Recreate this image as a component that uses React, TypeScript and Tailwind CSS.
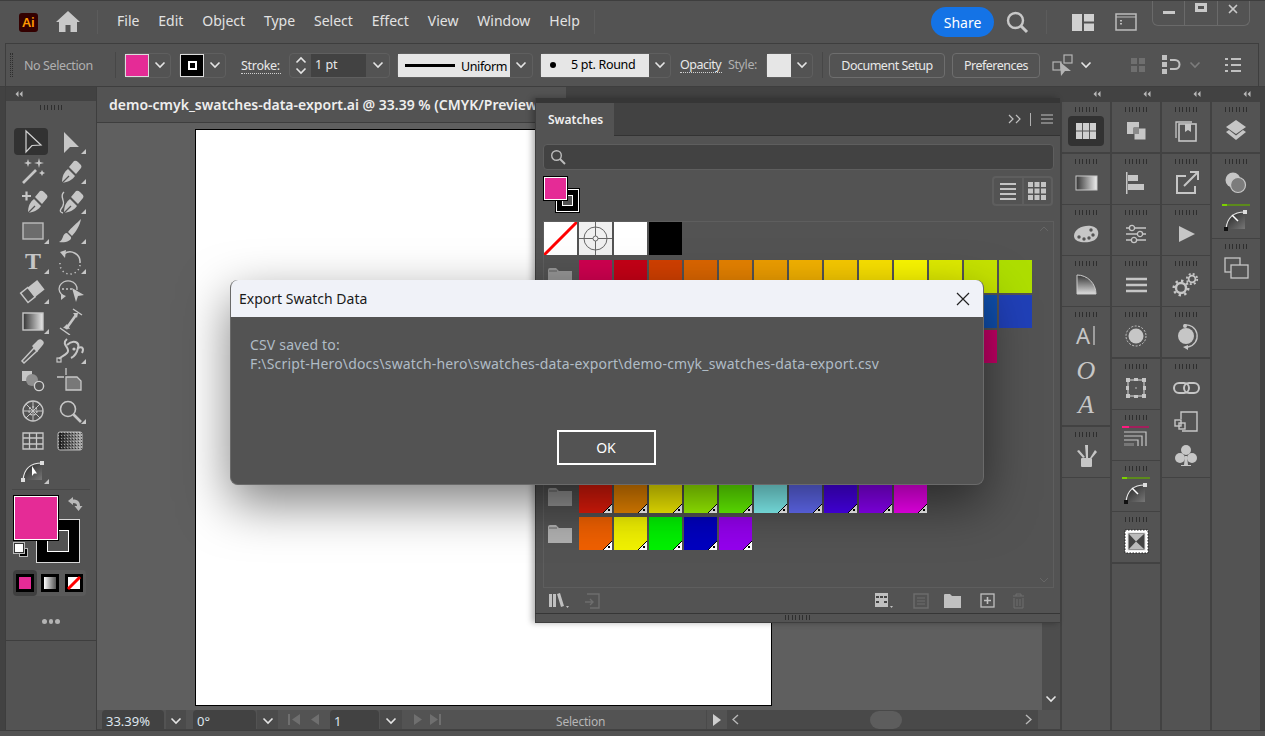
import { X } from 'lucide-react';

const PANEL_TOOLS = ['select', 'direct', 'wand', 'pen', 'anchor', 'curvature', 'rect', 'brush', 'type', 'rotate', 'eraser', 'puppet', 'gradient', 'width', 'dropper', 'warp', 'shaper', 'crop', 'symbol', 'zoom', 'grid', 'mesh'];
const HAS_CORNER = ['direct', 'pen', 'curvature', 'rect', 'brush', 'type', 'rotate', 'eraser', 'gradient', 'warp', 'zoom', 'curve'];

const ROW_A = ['#d00050', '#c60016', '#d24000', '#dc6600', '#e68200', '#ee9e00', '#f4b200', '#f8ca00', '#fae200', '#fbf800', '#dfec00', '#c6e300', '#aede00'];
const ROW_B = ['#005c9c', '#00609c', '#00689c', '#00709c', '#00789c', '#007f9c', '#00709c', '#00609c', '#00509c', '#00459c', '#003f9c', '#0f4fae', '#2040b8'];
const ROW_C = ['#4020a0', '#5020a0', '#6020a0', '#7020a0', '#8020a0', '#9020a0', '#a020a0', '#b020a0', '#c0209c', '#c82090', '#cc0080', '#c80068'];
const ROW_D = ['#e61c0b', '#ee8800', '#fff800', '#a0ff00', '#68ff00', '#88ffff', '#6670ff', '#4c00fa', '#9000ff', '#ff00ff'];
const ROW_E = ['#f06000', '#f2f200', '#00f200', '#0000c0', '#9400ee'];

function Chev({ muted }: { muted?: boolean }) {
  return (
    <svg width="12" height="8" viewBox="0 0 12 8" className={muted ? 'text-[#7c7c7c]' : 'text-[#e4e4e4]'}>
      <path d="M1.5 1.5 L6 6 L10.5 1.5" fill="none" stroke="currentColor" strokeWidth="1.6" />
    </svg>
  );
}

function Collapse() {
  return (
    <svg width="8" height="6" viewBox="0 0 8 6" className="text-[#b8b8b8]">
      <path d="M3.5 0 L0.5 3 L3.5 6 Z M7.5 0 L4.5 3 L7.5 6 Z" fill="currentColor" />
    </svg>
  );
}

function Grip({ w = 7 }: { w?: number }) {
  return (
    <div className="flex gap-[2.5px]">
      {Array.from({ length: w }).map((_, i) => (
        <div key={i} className="w-px h-[5px] bg-[#2e2e2e]" />
      ))}
    </div>
  );
}

function Pen({ plus, tail }: { plus?: boolean; tail?: boolean }) {
  return (
    <g>
      <path d="M-8 12 C-8 5 -6 1 -2 -2 L5 5 C2 9 -2 11 -8 12 Z" fill="currentColor" />
      <path d="M-1 -4 L4 -10 Q6 -11 8 -9 L11 -6 Q12 -4 11 -3 L6 3 Z" fill="currentColor" />
      <path d="M-8 12 L-1 5" stroke="#535353" strokeWidth="1.2" />
      {plus && <path d="M-14 -5 H-5 M-9.5 -9.5 V-0.5" stroke="currentColor" strokeWidth="2.2" />}
      {tail && <path d="M-8 -9 C-14 -4 -4 0 -11 8 Q-13 11 -9 12" fill="none" stroke="currentColor" strokeWidth="1.4" />}
    </g>
  );
}

function Curve({ dark, id }: { dark?: boolean; id: string }) {
  return (
    <g>
      <defs>
        <linearGradient id={id} x1="0" y1="0" x2="1" y2="1">
          <stop offset="0" stopColor="#222" />
          <stop offset="1" stopColor="#777" />
        </linearGradient>
      </defs>
      <path d="M-10 9 C-9 -2 -3 -8 9 -8 V9 Z" fill={`url(#${id})`} />
      <path d="M-10 9 C-9 -2 -3 -8 9 -8" fill="none" stroke="#e6e6e6" strokeWidth="1.2" />
      <rect x="-12" y="7" width="4" height="4" fill={dark ? '#111' : '#ddd'} />
      <rect x="7" y="-10" width="4" height="4" fill="#ddd" />
      {dark ? <path d="M-4 -5 L2 1" stroke="#fff" strokeWidth="1.5" /> : <path d="M-1 -5 V5 L1 2.5 L4 2.5 Z" fill="#fff" />}
    </g>
  );
}

function ToolGlyph({ name }: { name: string }) {
  switch (name) {
    case 'select':
      return <path d="M-5 -10 L10 4 L1 4.5 L-5 11 Z" fill="none" stroke="#d4d4d4" strokeWidth="1.2" />;
    case 'direct':
      return <path d="M-6 -9 L9 6 L0 6 L-6 12 Z" fill="currentColor" />;
    case 'wand':
      return (
        <g>
          <path d="M-10 12 L3 -1" stroke="currentColor" strokeWidth="2.6" />
          <path d="M-5 -12 L-4 -9 L-1 -8 L-4 -7 L-5 -4 L-6 -7 L-9 -8 L-6 -9 Z M6 -13 L7 -9 L11 -8 L7 -7 L6 -3 L5 -7 L1 -8 L5 -9 Z M9 -1 L10 1 L12 2 L10 3 L9 5 L8 3 L6 2 L8 1 Z" fill="currentColor" />
        </g>
      );
    case 'pen':
      return <Pen />;
    case 'anchor':
      return <g transform="translate(3 0)"><Pen plus /></g>;
    case 'curvature':
      return <g transform="translate(2 0)"><Pen tail /></g>;
    case 'rect':
      return <rect x="-10" y="-8" width="20" height="16" fill="#6c6c6c" stroke="#bcbcbc" strokeWidth="1.4" />;
    case 'brush':
      return (
        <g fill="currentColor">
          <path d="M11 -12 C7 -8 1 -3 -2 1 L2 5 C6 1 10 -6 11 -12 Z" />
          <path d="M-3 2 C-8 2 -6 9 -11 11 C-5 12 2 10 1 6 Z" />
        </g>
      );
    case 'type':
      return <text x="0" y="8" textAnchor="middle" fontSize="24" fontWeight="700" fontFamily="Liberation Serif, serif" fill="currentColor">T</text>;
    case 'rotate':
      return (
        <g fill="none" stroke="currentColor" strokeWidth="1.5">
          <path d="M-6 -7 A10 10 0 0 1 10 2" />
          <path d="M-10 -9 L-4 -11 L-5 -3 Z" fill="currentColor" stroke="none" />
          <path d="M10 4 A10 10 0 0 1 -10 2" strokeDasharray="1.3 3" />
        </g>
      );
    case 'eraser':
      return (
        <g transform="rotate(-38)">
          <rect x="-11" y="-6" width="9" height="12" fill="none" stroke="currentColor" strokeWidth="1.5" />
          <rect x="-2" y="-6" width="12" height="12" fill="currentColor" />
        </g>
      );
    case 'puppet':
      return (
        <g>
          <path d="M-6 5 A9 8 0 1 1 7 -1" fill="none" stroke="currentColor" strokeWidth="1.3" />
          <path d="M-9 3 L-9 9 L-4 5 Z" fill="currentColor" />
          <circle cx="-7" cy="-2" r="1" fill="currentColor" />
          <circle cx="-3" cy="-2" r="1" fill="currentColor" />
          <circle cx="1" cy="-2" r="1" fill="currentColor" />
          <path d="M2 -3 L14 4 L8 5 L6 11 Z" fill="currentColor" />
        </g>
      );
    case 'gradient':
      return (
        <g>
          <defs>
            <linearGradient id="toolGrad">
              <stop offset="0" stopColor="#333" />
              <stop offset="1" stopColor="#e8e8e8" />
            </linearGradient>
          </defs>
          <rect x="-10" y="-8" width="20" height="17" fill="url(#toolGrad)" stroke="#c8c8c8" strokeWidth="1.4" />
        </g>
      );
    case 'width':
      return (
        <g stroke="currentColor" strokeWidth="1.4" fill="currentColor">
          <path d="M-10 7 L0 14 M3 -12 L12 -6" />
          <path d="M-4 8 L6 -6" strokeWidth="2.6" />
          <path d="M-7 7 L-3 3 L0 8 Z M3 -8 L8 -8 L7 -3 Z" stroke="none" />
        </g>
      );
    case 'dropper':
      return (
        <g>
          <path d="M-9 12 L-11 10 L1 -3 L4 0 Z" fill="none" stroke="currentColor" strokeWidth="1.5" />
          <path d="M-1 -5 L5 -11 Q8 -13 10 -10 Q12 -8 9 -5 L4 1 Z" fill="currentColor" />
        </g>
      );
    case 'warp':
      return (
        <g fill="none" stroke="currentColor" strokeWidth="2">
          <path d="M-3 -12 C-10 -6 2 -3 -3 2 C-6 5 -10 6 -11 8" />
          <path d="M-3 -6 C3 -12 10 -9 8 -3 C13 -5 14 -2 12 2 M1 7 C5 5 7 2 8 -3" />
          <rect x="-13" y="7" width="4" height="4" strokeWidth="1.2" />
          <circle cx="4" cy="-2" r="1.6" fill="currentColor" stroke="none" />
        </g>
      );
    case 'shaper':
      return (
        <g>
          <rect x="-11" y="-10" width="10" height="10" fill="currentColor" />
          <circle cx="-1" cy="-1" r="6" fill="#8f8f8f" />
          <circle cx="6" cy="5" r="4.6" fill="#535353" stroke="#d0d0d0" strokeWidth="1.4" />
        </g>
      );
    case 'crop':
      return (
        <g>
          <path d="M-4 -4 H7 L11 0 V9 H-4 Z" fill="#787878" stroke="#c8c8c8" strokeWidth="1.3" />
          <path d="M-13 -4 H-6 M-4 -13 V-6" stroke="#c8c8c8" strokeWidth="1.3" />
        </g>
      );
    case 'symbol':
      return (
        <g fill="none" stroke="currentColor" strokeWidth="1.4">
          <circle r="10" />
          <circle r="4" strokeDasharray="2 1.5" />
          <path d="M0 -10 V10 M-10 0 H10 M-7 -7 L7 7 M7 -7 L-7 7" strokeWidth="1" />
        </g>
      );
    case 'zoom':
      return (
        <g fill="none" stroke="currentColor">
          <circle cx="-2" cy="-2" r="7.5" strokeWidth="1.6" />
          <path d="M3.5 3.5 L11 11" strokeWidth="2.6" />
        </g>
      );
    case 'grid':
      return <path d="M-10 -8 H10 V8 H-10 Z M-10 -3 H10 M-10 3 H10 M-3.5 -8 V8 M3.5 -8 V8" fill="none" stroke="#c8c8c8" strokeWidth="1.3" />;
    case 'mesh':
      return (
        <g>
          <defs>
            <linearGradient id="meshGrad">
              <stop offset="0" stopColor="#1a1a1a" />
              <stop offset="1" stopColor="#aaa" />
            </linearGradient>
            <pattern id="meshDots" width="3" height="3" patternUnits="userSpaceOnUse">
              <rect width="1" height="1" fill="#ddd" opacity="0.6" />
              <rect x="2" y="1" width="1" height="1" fill="#000" opacity="0.6" />
            </pattern>
          </defs>
          <rect x="-12" y="-9" width="24" height="18" rx="2" fill="url(#meshGrad)" stroke="#bbb" />
          <rect x="-12" y="-9" width="24" height="18" rx="2" fill="url(#meshDots)" />
        </g>
      );
    case 'curve':
      return <Curve id="curveTool" />;
  }
  return null;
}

function Tool({ name }: { name: string }) {
  return (
    <div className={name === 'select' ? 'h-[27px] w-[34px] my-auto bg-[#323232] rounded-sm flex items-center justify-center' : 'h-[30px] flex items-center justify-center'}>
      <svg width="34" height="28" viewBox="-17 -14 34 28" className="text-[#c6c6c6]">
        <ToolGlyph name={name} />
        {HAS_CORNER.includes(name) && <path d="M16 13 H11 L16 8 Z" fill="#c6c6c6" />}
      </svg>
    </div>
  );
}

function DockGlyph({ name, slot }: { name: string; slot: string }) {
  switch (name) {
    case 'swatches':
      return (
        <g>
          <rect x="-10" y="-8" width="20" height="16" fill="#cfcfcf" />
          <path d="M-10 0 H10 M-3.5 -8 V8 M3.5 -8 V8" stroke="#555" strokeWidth="1" />
        </g>
      );
    case 'gradient':
      return (
        <g>
          <defs>
            <linearGradient id="dockGrad">
              <stop offset="0" stopColor="#333" />
              <stop offset="1" stopColor="#eee" />
            </linearGradient>
          </defs>
          <rect x="-10" y="-7" width="21" height="14" fill="url(#dockGrad)" stroke="#c8c8c8" />
        </g>
      );
    case 'palette':
      return (
        <g>
          <path d="M-12 2 C-12 -5 -3 -9 5 -8 C11 -7 13 -3 12 1 C11 5 8 7 3 8 C-3 9 -12 8 -12 2 Z" fill="currentColor" />
          <circle cx="-7" cy="3" r="1.7" fill="#535353" />
          <circle cx="-2" cy="5" r="1.7" fill="#535353" />
          <circle cx="3" cy="4" r="1.7" fill="#535353" />
          <circle cx="7" cy="1" r="1.7" fill="#535353" />
          <circle cx="5" cy="-4" r="1.7" fill="#535353" />
        </g>
      );
    case 'quarter':
      return (
        <g>
          <defs>
            <linearGradient id="quarterGrad" x1="0" y1="0" x2="0" y2="1">
              <stop offset="0" stopColor="#333" />
              <stop offset="1" stopColor="#ddd" />
            </linearGradient>
          </defs>
          <path d="M-9 -10 A19 19 0 0 1 10 9 H-9 Z" fill="url(#quarterGrad)" stroke="#ccc" />
        </g>
      );
    case 'ai':
      return (
        <g>
          <text x="-3" y="8" textAnchor="middle" fontSize="22" fontFamily="Noto Sans, sans-serif" fill="currentColor">A</text>
          <path d="M8 -10 V9" stroke="currentColor" strokeWidth="1.3" />
        </g>
      );
    case 'oItalic':
      return <text x="0" y="9" textAnchor="middle" fontSize="26" fontStyle="italic" fontFamily="Liberation Serif, serif" fill="currentColor">O</text>;
    case 'aItalic':
      return <text x="0" y="9" textAnchor="middle" fontSize="26" fontStyle="italic" fontFamily="Liberation Serif, serif" fill="currentColor">A</text>;
    case 'holder':
      return (
        <g fill="currentColor">
          <rect x="-5" y="2" width="11" height="9" rx="1" />
          <path d="M-3 2 L-9 -5 L-7 -6 L-1 1 Z M0 2 L-1 -11 L2 -11 L2 2 Z M4 2 L9 -6 L11 -4 L6 2 Z" />
        </g>
      );
    case 'arrange':
      return (
        <g fill="currentColor">
          <rect x="-9" y="-9" width="12" height="12" />
          <rect x="-2" y="-3" width="12" height="12" stroke="#535353" />
          <rect x="-3" y="-3" width="6" height="6" fill="#8a8a8a" />
        </g>
      );
    case 'align':
      return (
        <g fill="currentColor">
          <rect x="-10" y="-11" width="1.5" height="22" />
          <rect x="-8" y="-8" width="10" height="6" />
          <rect x="-8" y="1" width="16" height="6" />
        </g>
      );
    case 'sliders':
      return (
        <g fill="#535353" stroke="currentColor" strokeWidth="1.3">
          <path d="M-10 -6 H10 M-10 0 H10 M-10 6 H10" />
          <circle cx="-4" cy="-6" r="2.6" />
          <circle cx="4" cy="0" r="2.6" />
          <circle cx="-2" cy="6" r="2.6" />
        </g>
      );
    case 'lines':
      return <path d="M-10 -6 H11 M-10 0 H11 M-10 6 H11" stroke="currentColor" strokeWidth="2.6" />;
    case 'circle':
      return (
        <g>
          <circle r="7.5" fill="currentColor" />
          <circle r="10" fill="none" stroke="currentColor" strokeDasharray="2 1.5" />
        </g>
      );
    case 'free':
      return (
        <g>
          <rect x="-8" y="-8" width="16" height="16" fill="none" stroke="currentColor" strokeWidth="1.2" />
          <circle r="0.8" fill="currentColor" />
          <path d="M-10 -10 h4 v4 h-4 Z M6 -10 h4 v4 h-4 Z M-10 6 h4 v4 h-4 Z M6 6 h4 v4 h-4 Z M-2 -10 h4 v3 h-4 Z M-2 7 h4 v3 h-4 Z M-10 -2 h3 v4 h-3 Z M7 -2 h3 v4 h-3 Z" fill="currentColor" />
        </g>
      );
    case 'stroke':
      return (
        <g>
          <rect x="-14" y="-13" width="27" height="2" fill="#a0205c" />
          <rect x="-14" y="-13" width="7" height="2" fill="#ff1a80" />
          <path d="M-12 -7 H10 V7 M-12 -3 H6 V7 M-12 1 H2 V7" fill="none" stroke="currentColor" strokeWidth="1.2" />
          <rect x="-12" y="4" width="10" height="3" fill="#777" />
        </g>
      );
    case 'curveBar':
      return (
        <g>
          <rect x="-14" y="-13" width="28" height="2" fill="#5c8a1c" />
          <rect x="-14" y="-13" width="5" height="2" fill="#7cd000" />
          <g transform="translate(0 3)"><Curve dark id={`curve-${slot}`} /></g>
        </g>
      );
    case 'xbox':
      return (
        <g>
          <rect x="-11" y="-11" width="23" height="23" fill="#fff" />
          <rect x="-11" y="-11" width="23" height="23" fill="none" stroke="#222" strokeDasharray="1.5 1.5" />
          <rect x="-8" y="-8" width="17" height="17" fill="#444" stroke="#ddd" />
          <path d="M-7 -7 L8 -7 L0 0.5 Z M-7 8 L8 8 L0 0.5 Z" fill="#bbb" />
        </g>
      );
    case 'pages':
      return (
        <g fill="none" stroke="currentColor" strokeWidth="1.3">
          <path d="M-10 7 V-9 H6" />
          <rect x="-7" y="-7" width="17" height="17" strokeWidth="1.6" />
          <path d="M-1 -7 V1 L2 -1 L5 1 V-7 Z" fill="currentColor" stroke="none" />
        </g>
      );
    case 'export':
      return (
        <g fill="none" stroke="currentColor" strokeWidth="2">
          <path d="M0 -7 H-9 V10 H9 V3" />
          <path d="M-2 3 L11 -10 M4 -11 H12 V-3" />
        </g>
      );
    case 'play':
      return <path d="M-7 -8 L9 0 L-7 8 Z" fill="currentColor" />;
    case 'gears':
      return (
        <g fill="none" stroke="currentColor">
          <circle cx="-5" cy="3" r="5" strokeWidth="2.4" />
          <circle cx="-5" cy="3" r="7.3" strokeWidth="2.4" strokeDasharray="2.4 3.3" />
          <circle cx="6" cy="-6" r="3.4" strokeWidth="1.8" />
          <circle cx="6" cy="-6" r="5.2" strokeWidth="1.8" strokeDasharray="2 2.1" />
        </g>
      );
    case 'spin':
      return (
        <g>
          <circle r="8" fill="currentColor" />
          <path d="M-2 -11 A11 11 0 0 1 2 11" fill="none" stroke="currentColor" strokeWidth="1.3" />
          <circle cx="-1" cy="-10" r="2" fill="currentColor" />
          <path d="M2 9 L-3 11 L2 14 Z" fill="currentColor" />
        </g>
      );
    case 'link':
      return (
        <g fill="none" stroke="currentColor" strokeWidth="2">
          <rect x="-12" y="-5" width="15" height="10" rx="5" />
          <rect x="-2" y="-5" width="15" height="10" rx="5" />
        </g>
      );
    case 'transform':
      return (
        <g fill="none" stroke="currentColor" strokeWidth="1.4">
          <path d="M-5 -3 V-10 H11 V9 H-4" />
          <rect x="-11" y="-2" width="6" height="6" />
          <rect x="-7" y="1" width="6" height="6" />
        </g>
      );
    case 'club':
      return (
        <g fill="currentColor">
          <circle cy="-6" r="5" />
          <circle cx="-6" cy="2" r="5" />
          <circle cx="6" cy="2" r="5" />
          <path d="M-1 0 H1 L2 9 H5 V10 H-5 V9 H-2 Z" />
        </g>
      );
    case 'layers':
      return (
        <g fill="currentColor">
          <path d="M0 -11 L10 -4 L0 3 L-10 -4 Z" />
          <path d="M-10 1 L-7 -1 L0 4.5 L7 -1 L10 1 L0 9 Z" />
        </g>
      );
    case 'circles':
      return (
        <g>
          <circle cx="-3" cy="-3" r="7.5" fill="currentColor" />
          <circle cx="2" cy="2" r="7.5" fill="#7c7c7c" stroke="#c8c8c8" strokeWidth="1.2" />
        </g>
      );
    case 'copy':
      return (
        <g fill="#535353" stroke="currentColor" strokeWidth="1.3">
          <rect x="-11" y="-10" width="15" height="14" />
          <rect x="-5" y="-3" width="17" height="13" />
        </g>
      );
  }
  return null;
}

function DockIcon({ name, active, slot }: { name: string; active?: boolean; slot: string }) {
  return (
    <div className="h-[34px] flex items-center justify-center">
      <div className={active ? 'bg-[#323232] rounded w-[36px] h-[30px] flex items-center justify-center' : 'flex'}>
        <svg width="30" height="30" viewBox="-15 -15 30 30" overflow="visible" className="text-[#c6c6c6]">
          <DockGlyph name={name} slot={slot} />
        </svg>
      </div>
    </div>
  );
}

function DockGroup({ icons, active, slot }: { icons: string[]; active?: boolean; slot: string }) {
  return (
    <div className="bg-[#535353] pb-[4px] shrink-0">
      <div className="h-[12px] flex justify-center pt-[5px]"><Grip /></div>
      {icons.map((n) => (
        <DockIcon key={n} name={n} active={active} slot={slot} />
      ))}
    </div>
  );
}

function DockColumn({ groups, id }: { groups: string[][]; id: string }) {
  return (
    <div className="w-[48px] flex flex-col gap-[1.25px]">
      <div className="h-[14px] flex items-center justify-end pr-[9px]"><Collapse /></div>
      {groups.map((g, i) => (
        <DockGroup key={i} icons={g} active={g[0] === 'swatches'} slot={`${id}${i}`} />
      ))}
      <div className="flex-1 bg-[#535353]" />
    </div>
  );
}

function ChevBox({ className = '', muted }: { className?: string; muted?: boolean }) {
  return <div className={`flex items-center justify-center h-full ${className}`}><Chev muted={muted} /></div>;
}

function ControlBar() {
  return (
    <div className="h-[43px] ml-[5px] mr-[6px] bg-[#535353] border border-[#3e3e3e] border-b-0 flex items-center shrink-0 text-[12.5px] text-[#e8e8e8] whitespace-nowrap">
      <div className="ml-[4px] w-[3px] h-[24px] border-x border-dotted border-[#2e2e2e] shrink-0" />
      <div className="ml-[11px] w-[70px] pt-[2px] text-[#b0b0b0] tracking-[-0.4px] shrink-0">No Selection</div>
      <div className="ml-[21px] w-px h-[26px] bg-[#474747] shrink-0" />
      <div className="ml-[8px] w-[47px] h-[25px] flex border border-[#5f5f5f] rounded-sm shrink-0">
        <div className="w-[24px] h-full bg-[#e52b96] border border-[#dcdcdc] shrink-0" />
        <ChevBox className="flex-1" />
      </div>
      <div className="ml-[8px] w-[47px] h-[25px] flex border border-[#5f5f5f] rounded-sm shrink-0">
        <div className="w-[24px] h-full bg-black border border-[#dcdcdc] flex items-center justify-center shrink-0">
          <div className="w-[9px] h-[9px] border-2 border-white" />
        </div>
        <ChevBox className="flex-1" />
      </div>
      <div className="ml-[15px] mt-[2px] w-[40px] border-b border-dotted border-[#d0d0d0] leading-[15px] tracking-[-0.3px] shrink-0">Stroke:</div>
      <div className="ml-[8px] w-[101px] h-[25px] flex border border-[#5f5f5f] rounded-sm shrink-0">
        <div className="w-[21px] flex flex-col items-center justify-center gap-[3px] shrink-0">
          <div className="rotate-180 h-[8px] flex"><Chev /></div>
          <div className="h-[8px] flex"><Chev /></div>
        </div>
        <div className="w-[55px] bg-[#424242] flex items-center pl-[4px] pt-[1px] shrink-0">1 pt</div>
        <ChevBox className="flex-1" />
      </div>
      <div className="ml-[7px] w-[136px] h-[25px] flex border border-[#5f5f5f] rounded-sm shrink-0">
        <div className="w-[112px] bg-[#e6e6e6] flex items-center pl-[7px] text-black tracking-[-0.4px] shrink-0">
          <div className="w-[50px] h-[3px] bg-black mr-[6px] shrink-0" />
          <span className="pt-[4px]">Uniform</span>
        </div>
        <ChevBox className="flex-1" />
      </div>
      <div className="ml-[7px] w-[131px] h-[25px] flex border border-[#5f5f5f] rounded-sm shrink-0">
        <div className="w-[108px] bg-[#e6e6e6] flex items-center pl-[9px] text-black tracking-[-0.3px] shrink-0">
          <div className="w-[6px] h-[6px] rounded-full bg-black mr-[15px] shrink-0" />
          <span className="pt-[1px]">5 pt. Round</span>
        </div>
        <ChevBox className="flex-1" />
      </div>
      <div className="ml-[9px] w-[42px] border-b border-dotted border-[#d0d0d0] leading-[15px] tracking-[-0.5px] shrink-0">Opacity</div>
      <div className="ml-[6px] w-[31px] text-[#b0b0b0] tracking-[-0.4px] shrink-0">Style:</div>
      <div className="ml-[7px] w-[47px] h-[25px] flex border border-[#5f5f5f] rounded-sm shrink-0">
        <div className="w-[24px] h-full bg-[#e6e6e6] shrink-0" />
        <ChevBox className="flex-1" />
      </div>
      <div className="ml-[9px] w-px h-[26px] bg-[#474747] shrink-0" />
      <div className="ml-[6px] w-[116px] h-[25px] pt-[2px] border border-[#6e6e6e] rounded-sm flex items-center justify-center tracking-[-0.5px] shrink-0">Document Setup</div>
      <div className="ml-[7px] w-[88px] h-[25px] pt-[2px] border border-[#6e6e6e] rounded-sm flex items-center justify-center tracking-[-0.5px] shrink-0">Preferences</div>
      <svg width="22" height="22" viewBox="0 0 22 22" className="ml-[12px] text-[#b4b4b4] shrink-0">
        <rect x="1" y="8" width="8" height="8" fill="none" stroke="currentColor" strokeWidth="1.2" />
        <rect x="12" y="1" width="8" height="8" fill="none" stroke="currentColor" strokeWidth="1.2" />
        <path d="M8 8 L19 17 L13 17 L9 22 Z" fill="currentColor" />
      </svg>
      <div className="ml-[5px] w-[14px] flex justify-center shrink-0"><Chev /></div>
      <svg width="24" height="24" viewBox="0 0 24 24" className="ml-[33px] text-[#6f6f6f] shrink-0">
        <path d="M5 5 h6 v6 h-6 Z M13 5 h6 v6 h-6 Z M5 13 h6 v6 h-6 Z M13 13 h6 v6 h-6 Z" fill="currentColor" />
      </svg>
      <svg width="24" height="24" viewBox="0 0 24 24" className="ml-[10px] text-[#c0c0c0] shrink-0">
        <path d="M2 2 h5 v5 h-5 Z M2 9 h5 v5 h-5 Z M2 16 h5 v5 h-5 Z" fill="currentColor" />
        <path d="M10 7 H15 A4.5 4.5 0 0 1 15 16 H10" fill="none" stroke="currentColor" strokeWidth="2" />
      </svg>
      <div className="ml-[4px] w-[14px] flex justify-center shrink-0"><Chev muted /></div>
      <svg width="22" height="22" viewBox="0 0 22 22" className="ml-[19px] text-[#c0c0c0] shrink-0">
        <path d="M4 5 H7 M10 5 H20 M4 11 H7 M10 11 H20 M4 17 H7 M10 17 H20" stroke="currentColor" strokeWidth="2" />
      </svg>
    </div>
  );
}

function MenuBar() {
  return (
    <div className="h-[43px] flex items-center bg-[#535353] border-t border-[#3e3e3e] shrink-0 relative">
      <div className="ml-[19px] w-[19px] h-[19px] rounded-[3px] bg-[#330000] flex items-center justify-center text-[13px] font-semibold text-[#ff9a00] leading-none shrink-0">Ai</div>
      <svg width="26" height="22" viewBox="0 0 26 22" className="ml-[17px] text-[#c8c8c8] shrink-0">
        <path d="M13 0 L25 11 L22 11 V21 H15.5 V14 H10.5 V21 H4 V11 L1 11 Z" fill="currentColor" />
      </svg>
      <div className="ml-[16px] w-px h-[24px] bg-[#5c5c5c] shrink-0" />
      <div className="ml-[19px] mb-[3px] flex gap-[18.9px] text-[14px] text-[#e2e2e2] whitespace-nowrap">
        {['File', 'Edit', 'Object', 'Type', 'Select', 'Effect', 'View', 'Window', 'Help'].map((m) => (
          <span key={m}>{m}</span>
        ))}
      </div>
      <div className="ml-[14px] w-px h-[24px] bg-[#5c5c5c] shrink-0" />
      <div className="flex-1" />
      <div className="w-[63px] h-[30px] rounded-full bg-[#1473e6] text-white text-[14px] flex items-center justify-center shrink-0">Share</div>
      <svg width="24" height="24" viewBox="0 0 24 24" className="ml-[11px] text-[#c8c8c8] shrink-0">
        <circle cx="10.5" cy="10.5" r="7.5" fill="none" stroke="currentColor" strokeWidth="2.4" />
        <path d="M16 16 L22 22" stroke="currentColor" strokeWidth="3" />
      </svg>
      <div className="ml-[17px] w-px h-[24px] bg-[#5c5c5c] shrink-0" />
      <svg width="22" height="17" viewBox="0 0 22 17" className="ml-[25px] text-[#d0d0d0] shrink-0">
        <path d="M0 0 H10 V17 H0 Z M12 0 H22 V7.5 H12 Z M12 9.5 H22 V17 H12 Z" fill="currentColor" />
      </svg>
      <svg width="22" height="18" viewBox="0 0 22 18" className="ml-[21px] text-[#bcbcbc] shrink-0">
        <rect x="1" y="1" width="20" height="16" fill="none" stroke="currentColor" strokeWidth="1.5" />
        <path d="M1 4 H21" stroke="currentColor" />
        <path d="M5 7 h2 v1.5 h-2 Z M5 10 h2 v1.5 h-2 Z" fill="currentColor" />
      </svg>
      <div className="ml-[15px] w-[98px] h-[25px] mb-[18px] mr-[15px] flex border border-t-0 border-[#6a6a6a] rounded-b-md shrink-0 text-[#c8c8c8]">
        <div className="flex-1 flex items-center justify-center border-r border-[#6a6a6a]"><div className="w-[12px] h-[3px] bg-current" /></div>
        <div className="flex-1 flex items-start justify-center border-r border-[#6a6a6a] pt-[2px]"><div className="w-[12px] h-[9px] border-[3px] border-current" /></div>
        <div className="flex-1 flex items-start justify-center pt-[1px]"><X size={14} strokeWidth={3} /></div>
      </div>
    </div>
  );
}

function ToolsPanel() {
  return (
    <div className="w-[92px] ml-[5px] border-x border-[#3e3e3e] flex flex-col bg-[#535353] shrink-0">
      <div className="h-[14px] bg-[#424242] pl-[9px] flex items-center shrink-0"><Collapse /></div>
      <div className="h-[25px] flex justify-center pt-[4px] shrink-0"><Grip /></div>
      <div className="grid grid-cols-2 w-[74px] ml-[8px]">
        {PANEL_TOOLS.map((t) => (
          <Tool key={t} name={t} />
        ))}
        <Tool name="curve" />
      </div>
      <div className="mt-[3px] mx-[6px] h-px bg-[#474747]" />
      <div className="relative h-[72px] mt-[6px] shrink-0">
        {/* fill and stroke proxies overlap, like the real widget */}
        <div className="absolute left-[30px] top-[23px] w-[44px] h-[44px] bg-black border border-[#d8d8d8] flex items-center justify-center">
          <div className="w-[22px] h-[22px] bg-[#535353] border border-white" />
        </div>
        <div className="absolute left-[8px] top-0 w-[44px] h-[44px] bg-[#e52b96] border border-white outline outline-black" />
        <svg width="18" height="18" viewBox="0 0 18 18" className="absolute left-[60px] top-[0px] text-[#b8b8b8]">
          <path d="M2 5 L7 1 V3.5 C12 3.5 14 6 14 10 H16.5 L12.5 15 L8.5 10 H11 C11 8 10 7 7 7 V9 Z" fill="currentColor" />
        </svg>
        <div className="absolute left-[13px] top-[52px] w-[9px] h-[9px] bg-black border border-[#bbb]" />
        <div className="absolute left-[8px] top-[47px] w-[10px] h-[10px] bg-white border border-[#333] outline outline-[#bbb]" />
      </div>
      <div className="ml-[7px] mt-[2px] w-[73px] h-[26px] bg-[#5a5a5a] rounded-sm flex shrink-0">
        <div className="w-[24px] bg-[#3f3f3f] rounded-sm flex items-center justify-center">
          <div className="w-[18px] h-[18px] border-[3px] border-black bg-[#e52b96]" />
        </div>
        <div className="w-[25px] flex items-center justify-center">
          <div className="w-[18px] h-[18px] border-[3px] border-black bg-gradient-to-r from-white to-[#555]" />
        </div>
        <div className="w-[24px] flex items-center justify-center">
          <svg width="18" height="18" viewBox="0 0 18 18">
            <rect width="18" height="18" fill="#fff" stroke="#000" strokeWidth="6" />
            <path d="M3 15 L15 3" stroke="#f00" strokeWidth="3" />
          </svg>
        </div>
      </div>
      <div className="mt-[23px] flex justify-center gap-[2px] shrink-0">
        <div className="w-[4.5px] h-[4.5px] rounded-full bg-[#b4b4b4]" />
        <div className="w-[4.5px] h-[4.5px] rounded-full bg-[#b4b4b4]" />
        <div className="w-[4.5px] h-[4.5px] rounded-full bg-[#b4b4b4]" />
      </div>
      <div className="mt-[16px] h-px bg-[#3e3e3e] shrink-0" />
      <div className="flex-1" />
    </div>
  );
}

function StatusBar() {
  return (
    <div className="h-[19px] bg-[#535353] flex text-[13px] leading-[16px] text-[#dfe6ee] whitespace-nowrap overflow-hidden shrink-0">
      <div className="ml-[5px] w-[62px] bg-[#424242] pl-[4px] pt-[3px] shrink-0 rounded-t-sm">33.39%</div>
      <ChevBox className="w-[20px] ml-[2px] pt-[3px] bg-[#4b4b4b] shrink-0" />
      <div className="ml-[7px] w-[63px] bg-[#424242] pl-[4px] pt-[3px] shrink-0 rounded-t-sm">0°</div>
      <ChevBox className="w-[21px] ml-px pt-[3px] bg-[#4b4b4b] shrink-0" />
      <svg width="50" height="19" viewBox="0 0 50 19" className="ml-[10px] text-[#6f6f6f] shrink-0">
        <path d="M0 4 H2 V15 H0 Z M12 4 V15 L4 9.5 Z M31 4 V15 L23 9.5 Z" fill="currentColor" />
      </svg>
      <div className="ml-[-8px] w-[49px] bg-[#424242] pl-[4px] pt-[3px] shrink-0 rounded-t-sm">1</div>
      <ChevBox className="w-[22px] ml-px pt-[3px] bg-[#4b4b4b] shrink-0" />
      <svg width="40" height="19" viewBox="0 0 40 19" className="ml-[10px] text-[#6f6f6f] shrink-0">
        <path d="M2 4 V15 L10 9.5 Z M18 4 V15 L26 9.5 Z M27 4 H29 V15 H27 Z" fill="currentColor" />
      </svg>
      <div className="ml-[104px] w-[60px] text-[#b6b6b6] text-[12px] leading-[15px] pt-[4px] tracking-[-0.2px] shrink-0">Selection</div>
      <div className="ml-[90px] w-[21px] flex items-center justify-center border-l border-[#4a4a4a] shrink-0">
        <svg width="8" height="12" viewBox="0 0 8 12" className="text-[#cfcfcf]"><path d="M0 0 L8 6 L0 12 Z" fill="currentColor" /></svg>
      </div>
      <div className="flex-1 bg-[#494949] flex items-center pl-[5px] pr-[6px]">
        <svg width="7" height="11" viewBox="0 0 7 11" className="text-[#b8b8b8]"><path d="M6 1 L1 5.5 L6 10" fill="none" stroke="currentColor" strokeWidth="1.4" /></svg>
        <div className="flex-1 flex justify-center pl-[8px]"><div className="w-[32px] h-[18px] rounded-full bg-[#5d5d5d]" /></div>
        <svg width="7" height="11" viewBox="0 0 7 11" className="text-[#b8b8b8]"><path d="M1 1 L6 5.5 L1 10" fill="none" stroke="currentColor" strokeWidth="1.4" /></svg>
      </div>
      <div className="w-[22px] shrink-0" />
    </div>
  );
}

function Swatch({ color, global }: { color: string; global?: boolean }) {
  return (
    <div className="w-[33px] h-[33px] relative shrink-0" style={{ backgroundColor: color }}>
      {global && (
        <svg width="9" height="9" viewBox="0 0 9 9" className="absolute right-0 bottom-0">
          <path d="M9 0 V9 H0 Z" fill="#fff" />
          <path d="M9 0 L0 9" stroke="#000" />
          <rect x="5" y="5" width="2" height="2" fill="#000" />
        </svg>
      )}
    </div>
  );
}

function Folder({ light }: { light?: boolean }) {
  return (
    <div className="w-[35px] flex justify-center pt-[8px] pr-[4px] shrink-0">
      <svg width="24" height="18" viewBox="0 0 24 18" className={light ? 'text-[#b0b0b0]' : 'text-[#969696]'}>
        <path d="M0 2 Q0 0 2 0 H8 L11 3 H24 V18 H0 Z" fill="currentColor" />
        <path d="M1 3 H9" stroke="#535353" strokeWidth="0.8" />
      </svg>
    </div>
  );
}

function SwatchRow({ colors, global, light }: { colors: string[]; global?: boolean; light?: boolean }) {
  return (
    <div className="flex">
      <Folder light={light} />
      <div className="flex gap-[2px]">
        {colors.map((c, i) => (
          <Swatch key={i} color={c} global={global} />
        ))}
      </div>
    </div>
  );
}

function SwatchesPanel() {
  return (
    <div className="absolute left-[535px] top-[98px] w-[525px] h-[525px] bg-[#535353] border-l border-b border-[#3e3e3e] flex flex-col shadow-[-3px_0_6px_rgba(0,0,0,0.3)]">
      <div className="h-[5px] bg-[#363636] shrink-0" />
      <div className="h-[33px] bg-[#424242] flex items-stretch shrink-0 border-b border-[#333]">
        <div className="w-[78px] bg-[#535353] text-[12px] font-semibold text-[#f0f0f0] pl-[12px] flex items-center -mb-px">Swatches</div>
        <div className="flex-1" />
        <div className="flex items-center pr-[6px] text-[#c0c0c0]">
          <svg width="14" height="10" viewBox="0 0 14 10"><path d="M1 1 L5 5 L1 9 M8 1 L12 5 L8 9" fill="none" stroke="currentColor" strokeWidth="1.2" /></svg>
          <div className="w-px h-[13px] bg-[#b0b0b0] ml-[8px] mr-[9px]" />
          <svg width="14" height="10" viewBox="0 0 14 10"><path d="M1 1 H13 M1 5 H13 M1 9 H13" stroke="currentColor" strokeWidth="1.2" /></svg>
        </div>
      </div>
      <div className="mt-[8px] ml-[7px] w-[511px] h-[26px] bg-[#424242] border border-[#5e5e5e] rounded-sm flex items-center pl-[6px] shrink-0">
        <svg width="16" height="16" viewBox="0 0 16 16" className="text-[#bcbcbc]">
          <circle cx="6.5" cy="6.5" r="4.8" fill="none" stroke="currentColor" strokeWidth="1.4" />
          <path d="M10 10 L15 15" stroke="currentColor" strokeWidth="2" />
        </svg>
      </div>
      <div className="h-[51px] relative shrink-0">
        <div className="absolute left-[20px] top-[19px] w-[23px] h-[23px] bg-black border border-white outline outline-black flex items-center justify-center">
          <div className="w-[11px] h-[11px] bg-[#535353] border border-white" />
        </div>
        <div className="absolute left-[8px] top-[7px] w-[23px] h-[23px] bg-[#e52b96] border border-white outline outline-black" />
        <div className="absolute right-[7px] top-[6px] w-[61px] h-[30px] border-2 border-[#5e5e5e] rounded-sm flex text-[#c4c4c4]">
          <div className="flex-1 flex items-center justify-center border-r-2 border-[#5e5e5e]">
            <svg width="16" height="18" viewBox="0 0 16 18"><path d="M0 2 H16 M0 7 H16 M0 12 H16 M0 17 H16" stroke="currentColor" strokeWidth="2.2" /></svg>
          </div>
          <div className="flex-1 flex items-center justify-center">
            <svg width="18" height="18" viewBox="0 0 18 18"><path d="M0 0 h5 v5 h-5 Z M6.5 0 h5 v5 h-5 Z M13 0 h5 v5 h-5 Z M0 6.5 h5 v5 h-5 Z M6.5 6.5 h5 v5 h-5 Z M13 6.5 h5 v5 h-5 Z M0 13 h5 v5 h-5 Z M6.5 13 h5 v5 h-5 Z M13 13 h5 v5 h-5 Z" fill="currentColor" /></svg>
          </div>
        </div>
      </div>
      <div className="ml-[7px] w-[511px] h-[367px] border border-[#5e5e5e] flex flex-col shrink-0 relative">
        <div className="flex gap-[2px] h-[33px] shrink-0">
          <div className="w-[33px] h-[33px] bg-white relative shrink-0">
            <svg width="33" height="33" viewBox="0 0 33 33" className="absolute inset-0"><path d="M0 33 L33 0" stroke="#f00" strokeWidth="3" /></svg>
          </div>
          <div className="w-[33px] h-[33px] bg-[#f0f0f0] shrink-0">
            <svg width="33" height="33" viewBox="0 0 33 33" className="text-[#666]">
              <circle cx="16.5" cy="16.5" r="11.5" fill="none" stroke="currentColor" />
              <circle cx="16.5" cy="16.5" r="2.5" fill="none" stroke="currentColor" />
              <path d="M16.5 0 V14 M16.5 19 V33 M0 16.5 H14 M19 16.5 H33" stroke="currentColor" />
            </svg>
          </div>
          <Swatch color="#ffffff" />
          <Swatch color="#000000" />
        </div>
        <div className="mt-[5px] flex flex-col gap-[2px]">
          <SwatchRow colors={ROW_A} />
          <SwatchRow colors={ROW_B} />
          <SwatchRow colors={ROW_C} />
        </div>
        <div className="mt-[117px] flex flex-col gap-[4px]">
          <SwatchRow colors={ROW_D} global />
          <SwatchRow colors={ROW_E} global light />
        </div>
        <svg width="10" height="6" viewBox="0 0 10 6" className="absolute right-[4px] top-[4px] text-[#666]"><path d="M1 5 L5 1 L9 5" fill="none" stroke="currentColor" /></svg>
        <svg width="10" height="6" viewBox="0 0 10 6" className="absolute right-[4px] bottom-[4px] text-[#666]"><path d="M1 1 L5 5 L9 1" fill="none" stroke="currentColor" /></svg>
      </div>
      <div className="flex-1 flex items-center pl-[13px] text-[#c0c0c0]">
        <svg width="21" height="16" viewBox="0 0 21 16">
          <path d="M0 1 h3 v13 h-3 Z M4 1 h3 v13 h-3 Z M8 1 L11 0 L15 13 L12 14 Z" fill="currentColor" />
          <path d="M17 13 h3 l-1.5 2 Z" fill="currentColor" />
        </svg>
        <svg width="16" height="16" viewBox="0 0 16 16" className="ml-[14px] text-[#6e6e6e]">
          <path d="M3 1 H15 V15 H6 M1 9 H9 M6 6 L9 9 L6 12" fill="none" stroke="currentColor" strokeWidth="1.4" />
        </svg>
        <div className="flex-1" />
        <svg width="19" height="16" viewBox="0 0 19 16">
          <rect x="0" y="0" width="13" height="14" fill="currentColor" />
          <path d="M1 3 h3 v2 h-3 Z M5 3 h3 v2 h-3 Z M9 3 h3 v2 h-3 Z M1 8 h3 v2 h-3 Z M9 8 h3 v2 h-3 Z" fill="#444" />
          <path d="M15 13 h3 l-1.5 2 Z" fill="currentColor" />
        </svg>
        <svg width="16" height="16" viewBox="0 0 16 16" className="ml-[19px] text-[#6e6e6e]">
          <rect x="1" y="1" width="14" height="14" fill="none" stroke="currentColor" strokeWidth="1.4" />
          <path d="M4 5 H12 M4 8 H12 M4 11 H12" stroke="currentColor" />
        </svg>
        <svg width="17" height="14" viewBox="0 0 17 14" className="ml-[15px]">
          <path d="M0 1 Q0 0 1 0 H6 L8 2 H17 V14 H0 Z" fill="currentColor" />
        </svg>
        <svg width="15" height="15" viewBox="0 0 15 15" className="ml-[19px]">
          <rect x="1" y="1" width="13" height="13" fill="none" stroke="currentColor" strokeWidth="1.3" />
          <path d="M4 7.5 H11 M7.5 4 V11" stroke="currentColor" strokeWidth="1.6" />
        </svg>
        <svg width="15" height="16" viewBox="0 0 15 16" className="ml-[16px] mr-[34px] text-[#6e6e6e]">
          <path d="M2 3 H13 M5 3 V1 H10 V3 M3 5 V15 H12 V5 M6 6 V13 M9 6 V13" fill="none" stroke="currentColor" />
        </svg>
      </div>
      <div className="h-[9px] border-t border-[#363636] flex justify-center shrink-0 -ml-[1px]">
        <div className="pt-px"><Grip w={8} /></div>
      </div>
    </div>
  );
}

function ExportDialog() {
  return (
    <div className="absolute left-[230px] top-[280px] w-[754px] h-[205px] rounded-lg overflow-hidden bg-[#535353] shadow-[0_18px_50px_rgba(0,0,0,0.5)] border border-[#6a6a6a] border-t-0 flex flex-col">
      <div className="h-[37px] bg-[#f0f2f8] flex items-center pl-[9px] pr-[14px] text-[14px] text-[#1a1a1a] shrink-0 -mx-px">
        <span>Export Swatch Data</span>
        <div className="flex-1" />
        <svg width="14" height="14" viewBox="0 0 14 14" className="text-[#222]"><path d="M1 1 L13 13 M13 1 L1 13" stroke="currentColor" strokeWidth="1.2" /></svg>
      </div>
      <div className="pt-[18px] pl-[19px] text-[14px] leading-[19px] tracking-[0.17px] text-[#b0bcc6]">
        <div>CSV saved to:</div>
        <div className="whitespace-nowrap">F:\Script-Hero\docs\swatch-hero\swatches-data-export\demo-cmyk_swatches-data-export.csv</div>
      </div>
      <div className="flex-1" />
      <div className="flex justify-center pb-[19px] pr-[2px]">
        <div className="w-[99px] h-[35px] border-2 border-white flex items-center justify-center text-[14px] text-white">OK</div>
      </div>
    </div>
  );
}

export default function App() {
  return (
    <div className="relative w-[1265px] h-[736px] bg-[#535353] overflow-hidden flex flex-col font-['Noto_Sans','Open_Sans',sans-serif]">
      <MenuBar />
      <ControlBar />
      <div className="h-[645px] flex bg-[#424242] border-y border-[#3e3e3e] shrink-0">
        <ToolsPanel />
        {/* document area */}
        <div className="w-[963px] flex flex-col shrink-0">
          <div className="h-[36px] flex bg-[#424242] border-b border-[#3e3e3e] shrink-0 overflow-hidden">
            <div className="w-[469px] bg-[#535353] pl-[12px] pt-[8px] text-[14px] leading-[20px] font-semibold text-[#eeeeee] whitespace-nowrap shrink-0">demo-cmyk_swatches-data-export.ai @ 33.39 % (CMYK/Preview)</div>
          </div>
          <div className="h-[587px] flex shrink-0">
            <div className="flex-1 bg-[#5f5f5f] pl-[98px] pt-[6px]">
              <div className="w-[577px] h-[577px] bg-white border border-black" />
            </div>
            <div className="w-[18px] bg-[#4d4d4d] flex items-end justify-center pb-[7px] shrink-0"><Chev /></div>
          </div>
          <StatusBar />
        </div>
        {/* right docks */}
        <div className="flex-1 flex gap-[2px] pl-[2px] bg-[#424242]">
          <DockColumn id="a" groups={[['swatches'], ['gradient'], ['palette'], ['quarter'], ['ai', 'oItalic', 'aItalic'], ['holder']]} />
          <DockColumn id="b" groups={[['arrange'], ['align'], ['sliders'], ['lines'], ['circle'], ['free'], ['stroke'], ['curveBar'], ['xbox']]} />
          <DockColumn id="c" groups={[['pages'], ['export'], ['play'], ['gears'], ['spin'], ['link', 'transform', 'club']]} />
          <DockColumn id="d" groups={[['layers'], ['circles', 'curveBar'], ['copy']]} />
        </div>
      </div>
      <SwatchesPanel />
      <ExportDialog />
    </div>
  );
}
